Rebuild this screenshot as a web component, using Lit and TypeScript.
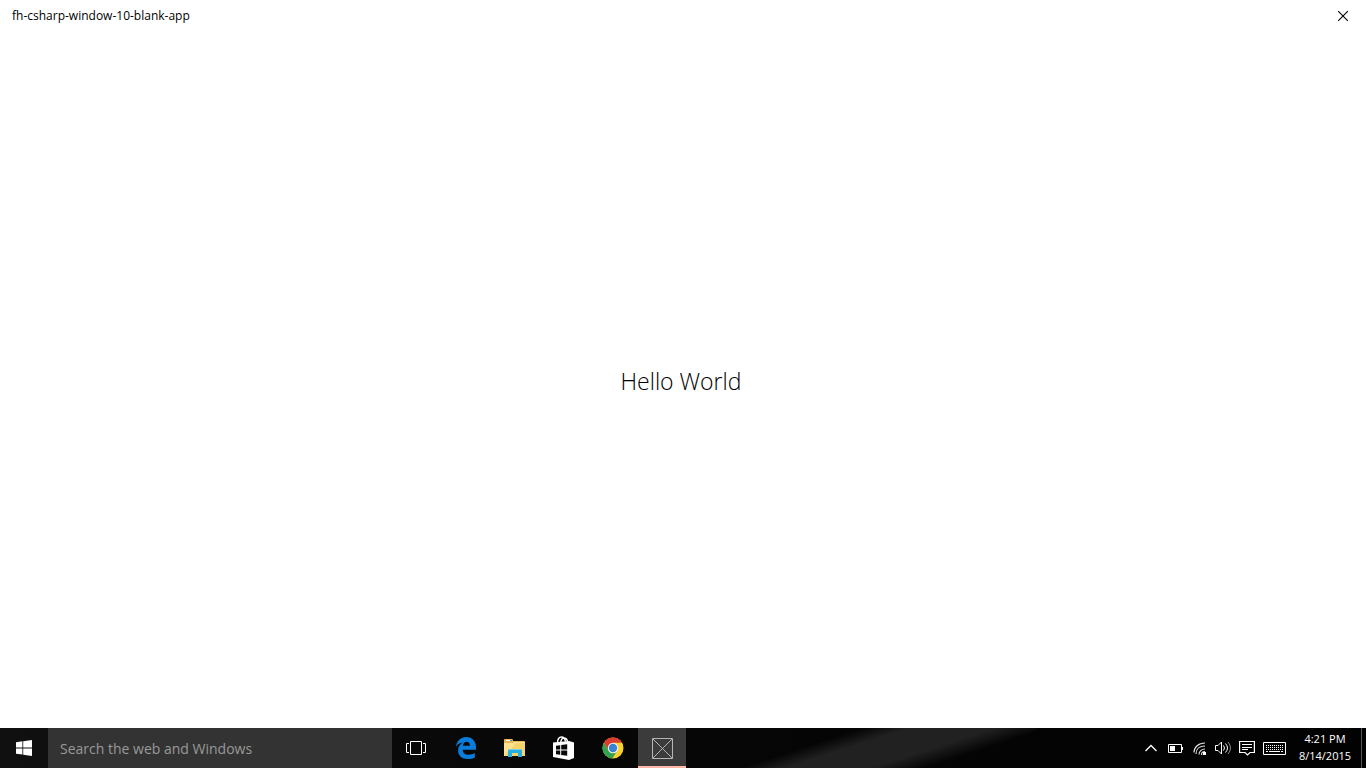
import { LitElement, html, css } from "lit";
import { customElement, state } from "lit/decorators.js";

@customElement("task-bar")
class TaskBar extends LitElement {
  @state() private query = "";

  static styles = css`
    :host {
      display: flex;
      height: 40px;
      color: #fff;
      background:
        linear-gradient(162deg, transparent 30%, #212121 41%, #212121 61%, transparent 74%) 69% 0 / 300px 40px no-repeat,
        linear-gradient(90deg, #101010, #060606 45%, #020202);
    }
    button {
      appearance: none;
      border: 0;
      padding: 0;
      margin: 0;
      color: inherit;
      background: none;
      font: inherit;
      display: flex;
      align-items: center;
      justify-content: center;
    }
    svg {
      display: block;
    }
    .start {
      width: 48px;
    }
    .search {
      box-sizing: border-box;
      width: 344px;
      border: 0;
      border-radius: 0;
      margin: 0;
      padding: 0 12px;
      outline: 0;
      background: #333;
      color: #fff;
      font: 14px "Open Sans", "Noto Sans", sans-serif;
    }
    .search::placeholder {
      color: #999;
      opacity: 1;
    }
    .apps {
      display: flex;
      gap: 1px;
      padding-left: 1px;
    }
    .app {
      width: 48px;
      border-top: 2px solid transparent;
      border-bottom: 2px solid transparent;
    }
    .app.active {
      background: #3b3b3b;
      border-top-color: #3b3b3b;
      border-bottom-color: #ffb6a6;
    }
    .tray {
      display: flex;
      align-items: stretch;
      margin-left: auto;
    }
    .tray-button {
      width: 24px;
    }
    .tray-button.wide {
      width: 30px;
    }
    .clock {
      width: 72px;
      padding-bottom: 2px;
      flex-direction: column;
      font: 11px/17px "Open Sans", "Noto Sans", sans-serif;
    }
    .desktop {
      width: 5px;
      border-left: 1px solid #555;
    }
  `;

  render() {
    return html`
      <button class="start" aria-label="Start">
        <svg width="16" height="16" viewBox="0 0 16 16" fill="#fff">
          <path d="M0 2.2 6.4 1.3V7.5H0zM7.2 1.2 16 0v7.5H7.2zM0 8.4h6.4v6.2L0 13.8zM7.2 8.4H16V16l-8.8-1.2z" />
        </svg>
      </button>
      <input
        class="search"
        type="text"
        aria-label="Search the web and Windows"
        placeholder="Search the web and Windows"
        .value=${this.query}
        @input=${(e: Event) => (this.query = (e.target as HTMLInputElement).value)}
      />
      <nav class="apps" aria-label="Applications">
        <button class="app" aria-label="Task View">
          <svg width="22" height="14" viewBox="0 0 22 14" fill="none" stroke="#fff">
            <path d="M4.500.5h11v13h-11zM3 2.500H.5v9H3M17 2.500h2.500v9H17" />
          </svg>
        </button>
        <button class="app" aria-label="Microsoft Edge">
          <svg width="20" height="22" viewBox="0 0 20 22" fill="#0a7ddc">
            <path d="M0 9.8C.7 4.400 4.400 0 10.300 0 16.400 0 20 4.400 20 10.400v2.300H6.700c.1 3.700 3.100 5.100 6.100 5.100 2.300 0 4.200-.7 6-1.700v4.300c-2 1.100-4.500 1.600-7 1.600-6 0-9.700-3.400-9.700-8.500 0-3.600 1.900-6.400 5-7.900C3.900 6 1.600 7.300 0 9.800zM6.900 8.800h7c0-2.500-1.200-4-3.500-4-2 0-3.200 1.700-3.500 4z" />
          </svg>
        </button>
        <button class="app" aria-label="File Explorer">
          <svg width="22" height="18" viewBox="0 0 22 18">
            <path fill="#e9b94f" d="M0 1q0-1 1-1h7q1 0 1 2h11q1 0 1 1v14H0z" />
            <path fill="#fff" d="M2 1h4v1H2z" />
            <path fill="#2d9bdc" d="M6 1h2v1H6z" />
            <path fill="#ffe391" d="M0 4h9l1-1h11v14H0z" />
            <path fill="#f8d36c" d="m0 17 12-13h9v13z" />
            <path fill="#27afe4" d="M4 18v-6q0-2 2-2h10q2 0 2 2v6h-4v-4H8v4z" />
            <path fill="#70d1f2" d="M6 10h10q2 0 2 1H4q0-1 2-1z" />
          </svg>
        </button>
        <button class="app" aria-label="Store">
          <svg width="23" height="24" viewBox="0 0 23 24">
            <path fill="none" stroke="#fff" stroke-width="1.400" d="M4.500 7C4.500 3.500 6 1 8.500 1c2 0 3.500 1.800 4 4.500M7.500 7C8 3.500 9.500 2 11 2c2 0 3.300 1.500 3.500 4" />
            <path fill="#fff" d="m0 6.500 16-1.500 5 1.500V22l-5 2L0 21z" />
            <path fill="#080808" d="m3 9.800 4.200-.6v4.300H3zM8.200 9l6-.8v5.300h-6zM3 14.500h4.200v4.300L3 18.200zM8.200 14.500h6v5.300l-6-.8z" />
          </svg>
        </button>
        <button class="app" aria-label="Google Chrome">
          <svg width="22" height="22" viewBox="0 0 22 22">
            <circle cx="11" cy="11" r="10.500" fill="#fbd22d" />
            <path fill="#dc3d31" d="M11 11 6.500 13.600 1.900 5.750A10.500 10.500 0 0 1 20.100 5.800H11z" />
            <path fill="#33a350" d="M1.900 5.750 6.500 13.600A5.200 5.200 0 0 0 11 16.200l3.400-1.200-4.100 6.500A10.500 10.500 0 0 1 1.900 5.750z" />
            <circle cx="11" cy="11" r="5.200" fill="#f4f4f4" />
            <circle cx="11" cy="11" r="4.200" fill="#3983d4" />
          </svg>
        </button>
        <button class="app active" aria-label="fh-csharp-window-10-blank-app">
          <svg width="22" height="22" viewBox="0 0 22 22" fill="none" stroke="#b5b5b5">
            <path d="M1.500 1.500h20v20h-20z" />
            <path d="m2 2 19 19M21 2 2 21" />
          </svg>
        </button>
      </nav>
      <div class="tray">
        <button class="tray-button" aria-label="Show hidden icons">
          <svg width="12" height="8" viewBox="0 0 12 8" fill="none" stroke="#fff" stroke-width="1.300">
            <path d="m.5 7 5.500-5.500L11.500 7" />
          </svg>
        </button>
        <button class="tray-button" aria-label="Battery">
          <svg width="15" height="9" viewBox="0 0 15 9">
            <path fill="none" stroke="#fff" d="M.5.5h13v8H.5z" />
            <path fill="#fff" d="M2 2h5v5H2zM14 3h1v3h-1z" />
          </svg>
        </button>
        <button class="tray-button" aria-label="Network">
          <svg width="13" height="13" viewBox="0 0 13 13" fill="none" stroke="#ddd" stroke-width="1.200">
            <path d="M1 10.500C1 5 5.500 1 12 1M3 12C3 7 6.500 4 12 4M6 12.500C6 9.500 8.500 7 12 7" />
            <path d="M8.500 13c0-2 1.500-3.500 3.500-3.500" />
            <path fill="#fff" stroke="none" d="M10 10h3v3h-3z" />
          </svg>
        </button>
        <button class="tray-button" aria-label="Volume">
          <svg width="16" height="14" viewBox="0 0 16 14" fill="none" stroke="#fff">
            <path d="M.5 4.500H3L6.500 1v12L3 9.500H.5z" />
            <path d="M8.500 4.500q2 2.500 0 5M10.500 2.500q4 4.500 0 9" />
            <path stroke="#888" d="M13 1q5 6 0 12" />
          </svg>
        </button>
        <button class="tray-button" aria-label="Notifications">
          <svg width="16" height="16" viewBox="0 0 16 16" fill="none" stroke="#fff">
            <path stroke-width="1.200" d="M.6 1.500h14.800v11H11L8.500 15 6 12.500H.6z" />
            <path d="M3 4.500h10M3 7.500h10M3 9.500h6" />
          </svg>
        </button>
        <button class="tray-button wide" aria-label="Touch keyboard">
          <svg width="23" height="13" viewBox="0 0 23 13" fill="none" stroke="#fff">
            <path d="M.5.5h22v12H.5z" />
            <path stroke-dasharray="1 1" d="M3 3.500h17M3 5.500h17M3 7.500h17" />
            <path d="M3 9.500h2M6 9.500h11M18 9.500h2" />
          </svg>
        </button>
        <button class="clock">
          <span>4:21 PM</span>
          <span>8/14/2015</span>
        </button>
        <button class="desktop" aria-label="Show desktop"></button>
      </div>
    `;
  }
}

@customElement("app-root")
class AppRoot extends LitElement {
  static styles = css`
    :host {
      display: flex;
      flex-direction: column;
      min-height: 100vh;
      background: #fff;
      color: #000;
      font-family: "Open Sans", "Noto Sans", sans-serif;
    }
    .title-bar {
      display: flex;
      justify-content: space-between;
      align-items: center;
      height: 32px;
      padding-left: 12px;
    }
    .title {
      font-size: 12px;
      line-height: 16px;
    }
    .close {
      display: flex;
      align-items: center;
      justify-content: center;
      width: 46px;
      height: 32px;
      padding: 0;
      border: 0;
      background: none;
    }
    .content {
      flex: 1;
      display: flex;
      align-items: center;
      justify-content: center;
      padding: 2px 4px 0 0;
    }
    .message {
      margin: 0;
      font-size: 23px;
      font-weight: 350;
      line-height: 32px;
    }
  `;

  render() {
    return html`
      <header class="title-bar">
        <span class="title">fh-csharp-window-10-blank-app</span>
        <button class="close" aria-label="Close">
          <svg width="10" height="10" viewBox="0 0 10 10" stroke="#000" stroke-width="1.100">
            <path d="m0 0 10 10M10 0 0 10" />
          </svg>
        </button>
      </header>
      <main class="content">
        <p class="message">Hello World</p>
      </main>
      <task-bar></task-bar>
    `;
  }
}
